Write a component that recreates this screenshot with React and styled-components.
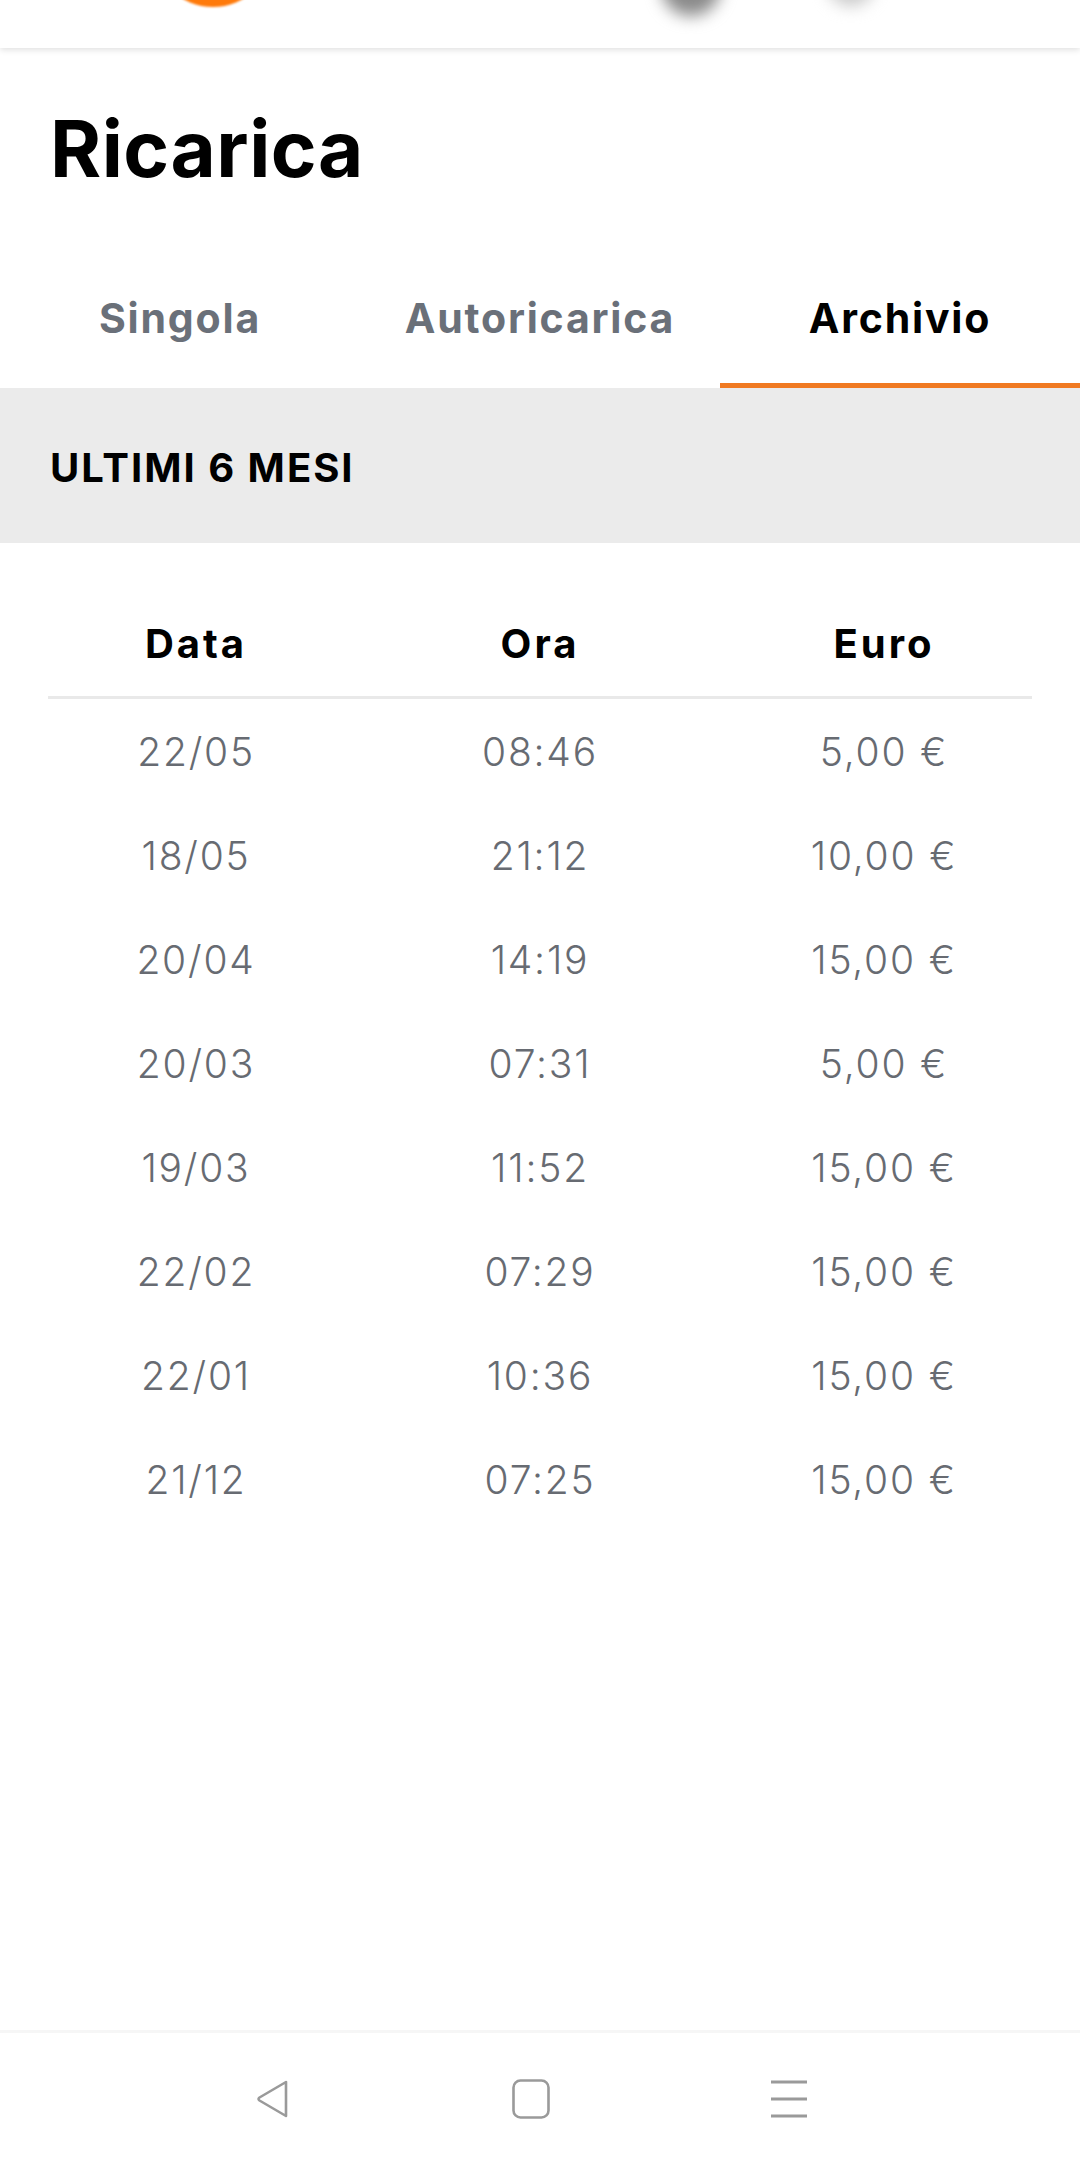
import React, { useState } from "react";
import styled, { createGlobalStyle } from "styled-components";

const GlobalStyle = createGlobalStyle`
  html, body {
    margin: 0;
    padding: 0;
    background: #ffffff;
  }
  body {
    font-family: "Inter", "Open Sans", "Liberation Sans", sans-serif;
    -webkit-font-smoothing: antialiased;
  }
  * {
    box-sizing: border-box;
  }
`;

const TABS = ["Singola", "Autoricarica", "Archivio"];

const ROWS = [
  { date: "22/05", time: "08:46", amount: "5,00 €" },
  { date: "18/05", time: "21:12", amount: "10,00 €" },
  { date: "20/04", time: "14:19", amount: "15,00 €" },
  { date: "20/03", time: "07:31", amount: "5,00 €" },
  { date: "19/03", time: "11:52", amount: "15,00 €" },
  { date: "22/02", time: "07:29", amount: "15,00 €" },
  { date: "22/01", time: "10:36", amount: "15,00 €" },
  { date: "21/12", time: "07:25", amount: "15,00 €" },
];

export default function App() {
  const [active, setActive] = useState(2);

  return (
    <Page>
      <GlobalStyle />
      <TopBar>
        <TopDot $size={120} $left={153} $top={-113} $color="#ff7a0a" $soft />
        <TopDot $size={60} $left={388} $top={-44} $color="#8a8a8a" $blur />
        <TopDot $size={48} $left={106} $top={-42} $color="#c9c9c9" $blur />
      </TopBar>

      <Title>Ricarica</Title>

      <Tabs>
        {TABS.map((tab, i) => (
          <Tab key={tab} $active={i === active} onClick={() => setActive(i)}>
            {tab}
          </Tab>
        ))}
      </Tabs>

      <Band>
        <BandLabel>ULTIMI 6 MESI</BandLabel>
      </Band>

      <Table>
        <HeadRow>
          <HeadCell>Data</HeadCell>
          <HeadCell>Ora</HeadCell>
          <HeadCell>Euro</HeadCell>
        </HeadRow>
        <Divider />
        {ROWS.map((row) => (
          <Row key={row.date + row.time}>
            <Cell>{row.date}</Cell>
            <Cell>{row.time}</Cell>
            <Cell>{row.amount}</Cell>
          </Row>
        ))}
      </Table>

      <Spacer />

      <NavBar>
        <NavButton aria-label="Indietro">
          <svg width="40" height="40" viewBox="0 0 40 40" fill="none">
            <path
              d="M33 3 L33 37 L6.5 21.5 Q4.5 20 6.5 18.5 Z"
              stroke="#9a9a9a"
              strokeWidth="2.6"
              strokeLinejoin="round"
            />
          </svg>
        </NavButton>
        <NavButton aria-label="Home">
          <svg width="40" height="40" viewBox="0 0 40 40" fill="none">
            <rect
              x="2.5"
              y="1.5"
              width="35"
              height="37"
              rx="7"
              stroke="#9a9a9a"
              strokeWidth="2.6"
            />
          </svg>
        </NavButton>
        <NavButton aria-label="Menu">
          <svg width="40" height="40" viewBox="0 0 40 40" fill="none">
            <path
              d="M2 3 H38 M2 20 H38 M2 37 H38"
              stroke="#9a9a9a"
              strokeWidth="3"
            />
          </svg>
        </NavButton>
      </NavBar>
    </Page>
  );
}

const Page = styled.div`
  display: flex;
  flex-direction: column;
  min-height: 100vh;
  background: #ffffff;
`;

const TopBar = styled.header`
  height: 48px;
  display: flex;
  align-items: flex-start;
  overflow: hidden;
  background: #ffffff;
  box-shadow: 0 2px 6px rgba(0, 0, 0, 0.12);
  position: relative;
  z-index: 1;
`;

const TopDot = styled.span`
  flex: none;
  width: ${({ $size }) => $size}px;
  height: ${({ $size }) => $size}px;
  margin-left: ${({ $left }) => $left}px;
  margin-top: ${({ $top }) => $top}px;
  border-radius: 50%;
  background: ${({ $color }) => $color};
  filter: ${({ $blur, $soft }) =>
    $blur ? "blur(8px)" : $soft ? "blur(1px)" : "none"};
`;

const Title = styled.h1`
  margin: 62px 0 0 50px;
  font-size: 78px;
  line-height: 1;
  font-weight: 700;
  color: #000000;
  letter-spacing: 0.5px;
`;

const Tabs = styled.nav`
  display: grid;
  grid-template-columns: repeat(3, 1fr);
`;

const Tab = styled.button`
  border: none;
  background: none;
  padding: 110px 0 44px;
  font-family: inherit;
  font-size: 41px;
  line-height: 1;
  font-weight: 700;
  letter-spacing: 1.8px;
  text-align: center;
  cursor: pointer;
  color: ${({ $active }) => ($active ? "#000000" : "#6a7079")};
  border-bottom: 5px solid
    ${({ $active }) => ($active ? "#f07a22" : "transparent")};
`;

const Band = styled.section`
  height: 155px;
  display: flex;
  align-items: center;
  padding: 4px 0 0 50px;
  background: #ebebeb;
`;

const BandLabel = styled.h2`
  margin: 0;
  font-size: 40px;
  line-height: 1;
  font-weight: 700;
  color: #000000;
  letter-spacing: 2px;
`;

const Table = styled.section`
  padding: 50px 24px 0;
  display: flex;
  flex-direction: column;
`;

const HeadRow = styled.div`
  display: grid;
  grid-template-columns: repeat(3, 1fr);
  align-items: center;
  height: 103px;
  padding-bottom: 2px;
`;

const HeadCell = styled.div`
  text-align: center;
  font-size: 40px;
  font-weight: 700;
  color: #000000;
  letter-spacing: 3px;
`;

const Divider = styled.hr`
  margin: 0 24px;
  border: none;
  height: 3px;
  background: #e9e9e9;
`;

const Row = styled.div`
  display: grid;
  grid-template-columns: repeat(3, 1fr);
  align-items: center;
  height: 104px;
`;

const Cell = styled.div`
  text-align: center;
  font-size: 39px;
  font-weight: 300;
  letter-spacing: 1.8px;
  color: #676b72;
`;

const Spacer = styled.div`
  flex: 1;
`;

const NavBar = styled.footer`
  height: 134px;
  display: flex;
  align-items: center;
  justify-content: center;
  gap: 218px;
  padding-right: 18px;
  border-top: 3px solid #f6f6f6;
  background: #ffffff;
`;

const NavButton = styled.button`
  border: none;
  background: none;
  padding: 0;
  width: 40px;
  height: 40px;
  display: flex;
  align-items: center;
  justify-content: center;
  cursor: pointer;
`;
